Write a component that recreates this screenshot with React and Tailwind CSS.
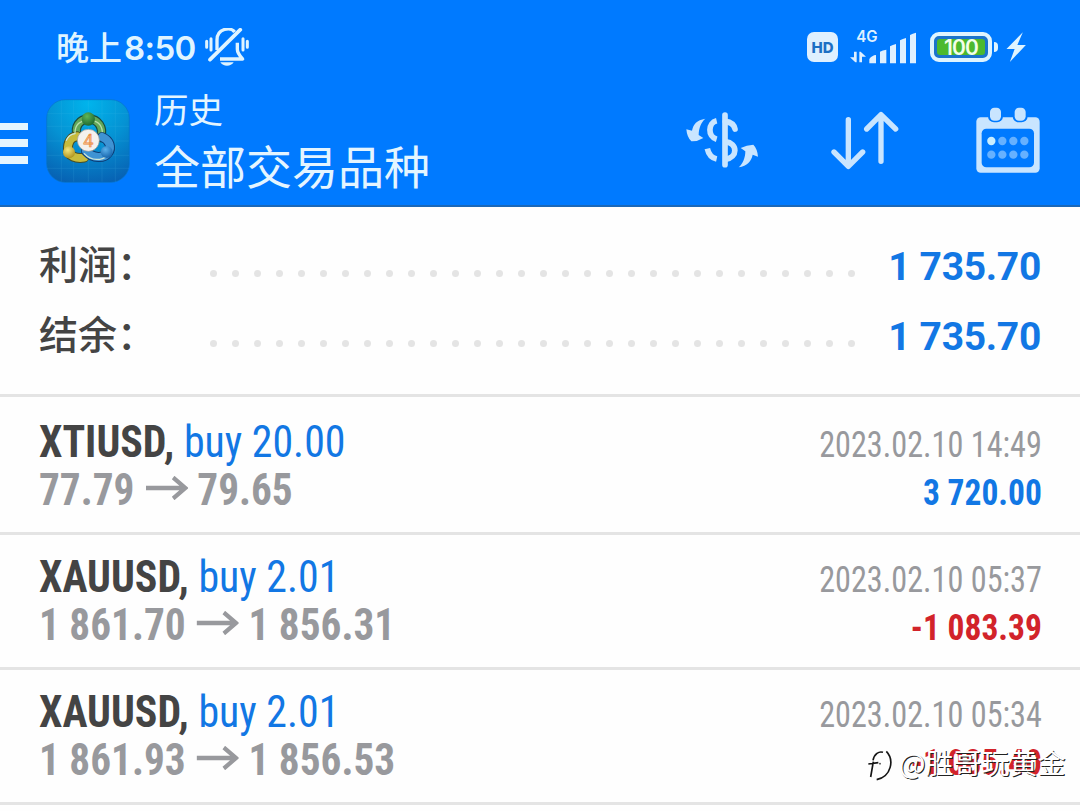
import clsx from "clsx";

const summary = [
  { label: "利润：", value: "1 735.70" },
  { label: "结余：", value: "1 735.70" },
];

const deals = [
  { symbol: "XTIUSD,", side: "buy 20.00", open: "77.79", close: "79.65", time: "2023.02.10 14:49", profit: "3 720.00" },
  { symbol: "XAUUSD,", side: "buy 2.01", open: "1 861.70", close: "1 856.31", time: "2023.02.10 05:37", profit: "-1 083.39" },
  { symbol: "XAUUSD,", side: "buy 2.01", open: "1 861.93", close: "1 856.53", time: "2023.02.10 05:34", profit: "-1 085.40" },
];

const MutedBell = () => (
  <svg width="44" height="38" viewBox="615 26 132 114" fill="none" stroke="#dff4ff" strokeWidth="10">
    <path d="M620 66v18M633 58v34M729 58v34M742 66v18" strokeWidth="9" strokeLinecap="round" />
    <path d="M651 92V62c0-36 42-40 53-24" />
    <path d="M712 70v20c0 12 8 20 16 29H660" strokeLinejoin="round" />
    <path d="M630 121L721 31" strokeWidth="11" strokeLinecap="round" />
    <path d="M661 129h40c-8 14-32 14-40 0z" fill="#dff4ff" stroke="none" />
  </svg>
);

const Signal = () => (
  <svg className="overflow-visible" width="66" height="34" viewBox="538 29 198 102" fill="#dff0ff">
    <text x="557" y="66" fontSize="46" fontFamily="Inter" fontWeight="600" textLength="64" lengthAdjust="spacingAndGlyphs">4G</text>
    <path d="M550 94h8v32h-4l-16-15h12zM566 126V94h4l16 15h-12v17z" />
    <path d="M596 116q8-11 20-12v25h-20zM628 94q8-4 19-6v41h-19zM658 78q8-5 18-7v58h-18zM688 60q8-5 18-7v76h-18zM718 44q8-5 18-7v92h-18z" />
  </svg>
);

const Bolt = () => (
  <svg width="20" height="30" viewBox="1007 36 58 88" fill="#dff4ff">
    <path d="M1056 37L1008 86h24l-14 38 47-50h-25z" />
  </svg>
);

const Logo = () => (
  <svg width="84" height="84" viewBox="137 238 252 252">
    <defs>
      <radialGradient id="tile" cx="0.5" cy="0.05" r="1">
        <stop offset="0" stopColor="#00b4ec" />
        <stop offset="0.5" stopColor="#0592d3" />
        <stop offset="1" stopColor="#0760b2" />
      </radialGradient>
      <radialGradient id="green" cx="0.4" cy="0.3" r="0.8">
        <stop offset="0" stopColor="#5fb556" />
        <stop offset="1" stopColor="#16602c" />
      </radialGradient>
      <radialGradient id="gold" cx="0.4" cy="0.3" r="0.8">
        <stop offset="0" stopColor="#f4e67c" />
        <stop offset="1" stopColor="#a68812" />
      </radialGradient>
      <radialGradient id="blue" cx="0.4" cy="0.3" r="0.8">
        <stop offset="0" stopColor="#5bb0ea" />
        <stop offset="1" stopColor="#0e5ba5" />
      </radialGradient>
    </defs>
    <rect x="139" y="240" width="248" height="248" rx="56" fill="url(#tile)" stroke="#0874c8" strokeWidth="2" />
    <path d="M183 242v244M220 242v244M264 242v244M305 242v244M345 242v244M140 282h246M140 320h246M140 364h246M140 407h246M140 446h246" stroke="#59c6ee" strokeWidth="1.5" opacity="0.25" />
    <g strokeLinecap="round" strokeLinejoin="round" fill="none">
      <path d="M232 350C220 322 238 298 265 298s46 24 36 56" stroke="#1c4b3b" strokeWidth="28" />
      <path d="M232 350C220 322 238 298 265 298s46 24 36 56" stroke="#62a85a" strokeWidth="21" />
      <path d="M230 350c-20 2-28 20-27 40s26 28 48 24" stroke="#4a4f22" strokeWidth="30" />
      <path d="M230 350c-20 2-28 20-27 40s26 28 48 24" stroke="#c6bb3c" strokeWidth="24" />
      <path d="M305 352c24 10 30 32 18 48s-44 18-66-6" stroke="#0c3c75" strokeWidth="30" />
      <path d="M305 352c24 10 30 32 18 48s-44 18-66-6" stroke="#3f93d3" strokeWidth="24" />
      <path d="M224 340c0-28 18-38 42-38s38 12 40 34" stroke="#b9deab" strokeWidth="4" />
      <path d="M198 362c4-10 14-18 26-20M252 402c22 24 52 20 70 6" stroke="#cfe6d8" strokeWidth="4" />
    </g>
    <circle cx="264" cy="298" r="20" fill="url(#green)" />
    <circle cx="206" cy="398" r="18" fill="url(#gold)" />
    <circle cx="319" cy="397" r="18" fill="url(#blue)" />
    <circle cx="264" cy="362" r="33" fill="#f4f1ee" stroke="#99998f" strokeWidth="2" />
    <text x="264" y="381" textAnchor="middle" fontSize="54" fontFamily="Roboto" fontWeight="400" fill="#f7c08b" stroke="#ec8d48" strokeWidth="2">4</text>
  </svg>
);

const CurrencyIcon = () => (
  <svg width="72" height="56" viewBox="48 274 216 168" fill="#c9e5ff">
    <path d="M106 294C80 298 70 310 66 330L49 326Q51 350 64 362Q82 363 100 352L86 343C86 322 94 304 106 294Z" />
    <path d="M206 440C232 436 244 422 248 402L264 408Q262 384 250 372Q230 373 212 382L226 392C226 412 218 430 206 440Z" />
    <g fill="none" stroke="#c9e5ff" strokeWidth="17">
      <path d="M140 300C114 306 112 348 140 356" />
      <path d="M112 384C116 402 126 412 140 415" strokeLinecap="butt" />
      <path d="M165 283V432" strokeLinecap="round" />
      <path d="M166 302C182 304 192 311 195 325" strokeLinecap="round" />
      <path d="M166 363C204 368 204 410 166 416" />
    </g>
  </svg>
);

const SortIcon = () => (
  <svg width="68" height="60" viewBox="484 273 204 180" fill="none" stroke="#c9e5ff" strokeWidth="16" strokeLinecap="round" strokeLinejoin="round">
    <path d="M536 299V438M493 396L536 439L579 396" />
    <path d="M634 424V284M591 327L634 284L678 327" />
  </svg>
);

const CalendarIcon = () => (
  <svg width="64" height="66" viewBox="920 259 192 198">
    <rect x="921" y="290" width="190" height="166" rx="13" fill="#c9e5ff" />
    <rect x="937" y="324" width="157" height="116" rx="14" fill="#007aff" />
    <rect x="956" y="250" width="45" height="55" rx="18" fill="#007aff" />
    <rect x="1030" y="250" width="45" height="55" rx="18" fill="#007aff" />
    <rect x="962" y="261" width="33" height="39" rx="13" fill="#c9e5ff" />
    <rect x="1036" y="261" width="33" height="39" rx="13" fill="#c9e5ff" />
    {[966, 999, 1032, 1065].map((x, i) => (
      <g key={x} fill="#66b1ff">
        <circle cx={x} cy="361" r="12.5" fill={i === 0 ? "#c9eeff" : "#66b1ff"} />
        <circle cx={x} cy="402" r="12.5" />
      </g>
    ))}
  </svg>
);

const Arrow = () => (
  <svg width="45" height="24" viewBox="0 0 45 24" fill="none" stroke="#98999d" strokeWidth="4.4">
    <path d="M0 12H42M29 1.500L42 12L29 22.500" />
  </svg>
);

const Header = () => (
  <header className="h-[207px] bg-[#007aff] border-b-2 border-[#1b68b8]">
    <div className="h-[94px] pl-[56px] pr-[54px] flex items-center">
      <span className="w-[139px] pt-px text-[33px] font-medium leading-none text-[#dff4ff] whitespace-nowrap">
        晚上<span className="ml-[2px] font-[Inter] font-semibold tracking-[-0.6px]">8:50</span>
      </span>
      <div className="ml-[10px]">
        <MutedBell />
      </div>
      <div className="ml-auto flex items-center">
        <div className="w-[31px] h-[30px] rounded-[7px] bg-[#dff0ff] text-[#1c6fc4] font-[Inter] font-extrabold text-[15px] leading-none flex items-center justify-center">
          HD
        </div>
        <div className="ml-[12px]">
          <Signal />
        </div>
        <div className="ml-[14px] w-[62px] h-[30px] rounded-[9px] border-4 border-[#dff4ff] bg-[#1b74cc] p-[3px]">
          <div className="h-full rounded-[3px] bg-[#4cb92e] text-[#f2ffe9] font-[Inter] font-semibold text-[21px] tracking-[-0.8px] flex items-center justify-center leading-none">
            100
          </div>
        </div>
        <div className="ml-[2px] w-[4px] h-[10px] rounded-r-full bg-[#dff4ff]" />
        <div className="ml-[8px]">
          <Bolt />
        </div>
      </div>
    </div>

    <div className="h-[94px] pr-[40px] flex items-center">
      <div className="w-[28px] pt-[4px] flex flex-col gap-[9px]">
        <div className="h-[7px] bg-[#e4f5ff]" />
        <div className="h-[8px] bg-[#e4f5ff]" />
        <div className="h-[8px] bg-[#e4f5ff]" />
      </div>
      <div className="ml-[18px]">
        <Logo />
      </div>
      <div className="ml-[24px] pb-[5px] text-[#e4f5ff] whitespace-nowrap">
        <p className="text-[34.5px] leading-[34px]">历史</p>
        <p className="mt-[16px] text-[46px] leading-[46px]">全部交易品种</p>
      </div>
      <div className="ml-auto flex items-center">
        <div className="pb-[3px]">
          <CurrencyIcon />
        </div>
        <div className="ml-[73px]">
          <SortIcon />
        </div>
        <div className="ml-[77px] pb-[3px]">
          <CalendarIcon />
        </div>
      </div>
    </div>
  </header>
);

const SummaryRow = ({ label, value }) => (
  <div className="h-[70px] flex items-center">
    <span className="w-[171px] pb-[6px] text-[39px] leading-none font-medium text-[#444] whitespace-nowrap">{label}</span>
    <div className="pt-[16px] flex gap-[15px]">
      {Array.from({ length: 30 }).map((_, i) => (
        <span key={i} className="w-[7px] h-[7px] rounded-full bg-[#e4e4e4]" />
      ))}
    </div>
    <span className="ml-auto pt-[4px] font-[Roboto] font-bold text-[39px] tracking-[-0.3px] leading-none text-[#1277e4] whitespace-nowrap">
      {value}
    </span>
  </div>
);

const Deal = ({ deal }) => (
  <div className="h-[135px] pt-[18px] first:h-[138px] first:pt-[21px] border-b-[3px] border-[#e4e4e4] pl-[39px] pr-[38px] flex justify-between font-['Roboto_Condensed',Roboto] font-stretch-condensed whitespace-nowrap">
    <div>
      <p className="text-[44px] leading-[48px] origin-left scale-x-[0.951]">
        <span className="font-bold text-[#444]">{deal.symbol}</span>{" "}
        <span className="font-[450] text-[#1277e4]">{deal.side}</span>
      </p>
      <p className="text-[44px] leading-[48px] origin-left scale-x-[0.938] font-bold text-[#98999d] flex items-center">
        {deal.open}
        <span className="ml-[12px] mr-[10px] pb-[4px]">
          <Arrow />
        </span>
        {deal.close}
      </p>
    </div>
    <div className="text-right pt-[3px]">
      <p className="text-[36px] leading-[48px] origin-right scale-x-[0.895] font-[450] text-[#98999d]">{deal.time}</p>
      <p
        className={clsx(
          "text-[36px] leading-[48px] origin-right scale-x-[0.93] font-bold",
          deal.profit.startsWith("-") ? "text-[#d2232a]" : "text-[#1277e4]"
        )}
      >
        {deal.profit}
      </p>
    </div>
  </div>
);

const Watermark = () => (
  <div className="absolute left-[868px] top-[748px] flex items-center whitespace-nowrap">
    <svg width="26" height="32" viewBox="267 206 78 96" fill="none">
      <path d="M282 292V242C284 222 296 214 312 214C344 216 344 282 296 291" stroke="#fff" strokeWidth="8" />
      <path d="M275 290L283 244M268 251L298 247M282 240C286 220 300 212 312 216M322 213C346 238 338 288 293 298" stroke="#151515" strokeWidth="5" />
      <circle cx="303" cy="250" r="2.500" fill="#333" />
    </svg>
    <span className="ml-[5px] pb-[6px] text-[28px] leading-none text-white [text-shadow:1px_1px_0_#222]">@胜哥玩黄金</span>
  </div>
);

const App = () => {
  return (
    <div className="relative w-[1080px] h-[811px] overflow-hidden bg-[#fefefe] font-['Noto_Sans_CJK_SC',sans-serif]">
      <Header />
      <section className="h-[190px] border-b-[3px] border-[#e4e4e4] pl-[39px] pr-[39px] pt-[23px]">
        {summary.map((row) => (
          <SummaryRow key={row.label} {...row} />
        ))}
      </section>
      <section>
        {deals.map((deal) => (
          <Deal key={deal.time} deal={deal} />
        ))}
      </section>
      <Watermark />
    </div>
  );
};

export default App;
